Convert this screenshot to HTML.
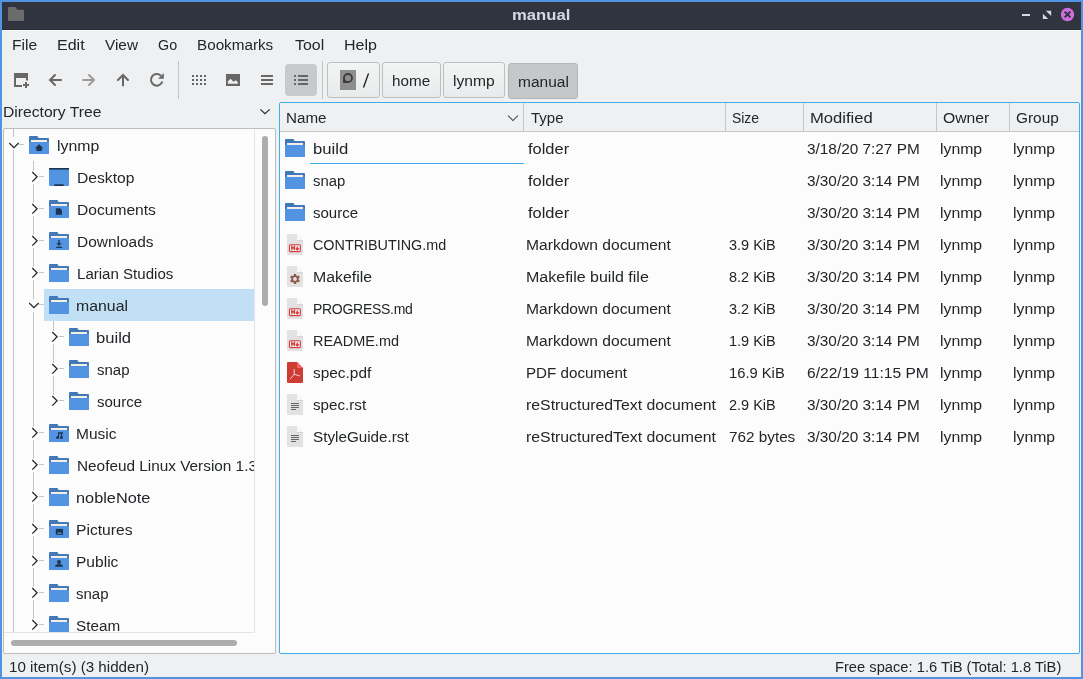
<!DOCTYPE html>
<html><head><meta charset="utf-8">
<style>
*{margin:0;padding:0;box-sizing:border-box}
html,body{width:1083px;height:679px;overflow:hidden;background:#5294e2}
body{position:relative;font-family:"Liberation Sans",sans-serif;font-size:14px;color:#31363b}
.a{position:absolute}
.t{position:absolute;white-space:nowrap;line-height:16px;will-change:transform}
.ln{position:absolute;background:#c9cacb}
.btn{position:absolute;border:1px solid #bcbebf;border-radius:3px;background:linear-gradient(#f3f4f4,#e9eaeb)}
</style></head><body>

<div class="a" style="left:2px;top:2px;width:1079px;height:675px;background:#eff0f1"></div>
<div class="a" style="left:2px;top:2px;width:1079px;height:27px;background:#2f343f"></div>
<div class="a" style="left:2px;top:29px;width:1079px;height:1px;background:#262a33"></div>
<div class="a" style="left:2px;top:30px;width:1079px;height:1px;background:#f8f9f9"></div>
<svg class="a" style="left:8px;top:7px" width="16" height="14" viewBox="0 0 16 14"><path d="M0 1a1 1 0 0 1 1-1h6.5l1.8 2.8H15a1 1 0 0 1 1 1v9.2a1 1 0 0 1-1 1H1a1 1 0 0 1-1-1z" fill="#6b6b6b"/></svg>
<div class="t" style="left:511.5px;top:7px;font-size:15px;font-weight:bold;color:#d3dae3;transform:scaleX(1.11);transform-origin:0 0">manual</div>
<div class="a" style="left:1022px;top:14px;width:8px;height:2px;background:#d3dae3"></div>
<svg class="a" style="left:1040px;top:8px" width="14" height="14" viewBox="1040 8 14 14"><path d="M1045.8 10.8H1051.2V16.1Z" fill="#d3dae3"/><path d="M1042.9 13.75V19.1H1048.2Z" fill="#d3dae3"/></svg>
<svg class="a" style="left:1058px;top:5px" width="20" height="20" viewBox="1058 5 20 20"><circle cx="1067.5" cy="14.5" r="6.65" fill="#cf6fdf"/><path d="M1064.6 11.6L1070.4 17.4M1070.4 11.6L1064.6 17.4" stroke="#2f343f" stroke-width="2"/></svg>
<div class="t" style="left:11.99px;top:37px;font-size:14px;color:#232629;transform:scaleX(1.1143);transform-origin:0 0;">File</div>
<div class="t" style="left:56.56px;top:37px;font-size:14px;color:#232629;transform:scaleX(1.1435);transform-origin:0 0;">Edit</div>
<div class="t" style="left:104.80px;top:37px;font-size:14px;color:#232629;transform:scaleX(1.0967);transform-origin:0 0;">View</div>
<div class="t" style="left:157.88px;top:37px;font-size:14px;color:#232629;transform:scaleX(1.0235);transform-origin:0 0;">Go</div>
<div class="t" style="left:197.31px;top:37px;font-size:14px;color:#232629;transform:scaleX(1.0884);transform-origin:0 0;">Bookmarks</div>
<div class="t" style="left:295.30px;top:37px;font-size:14px;color:#232629;transform:scaleX(1.1360);transform-origin:0 0;">Tool</div>
<div class="t" style="left:343.86px;top:37px;font-size:14px;color:#232629;transform:scaleX(1.1444);transform-origin:0 0;">Help</div>
<svg class="a" style="left:0;top:0" width="1083" height="100" viewBox="0 0 1083 100"><path d="M14 73H28V80.6H26V78H16V85H22V87H14Z" fill="#676767"/><rect x="23" y="84" width="6" height="2" fill="#676767"/><rect x="25" y="82" width="2" height="6" fill="#676767"/><path d="M61 80H50.5M55 75L50 80L55 85" stroke="#676767" stroke-width="2" fill="none" stroke-linecap="round"/><path d="M83 80H93.5M89 75L94 80L89 85" stroke="#9b9b9b" stroke-width="2" fill="none" stroke-linecap="round"/><path d="M123 85.5V75M118 80L123 75L128 80" stroke="#676767" stroke-width="2" fill="none" stroke-linecap="round"/><path d="M160.9 75.7A5.8 5.8 0 1 0 162.35 81.5" stroke="#676767" stroke-width="2" fill="none"/><path d="M163.8 72.9V78.7H158.1Z" fill="#676767"/><rect x="192" y="75" width="2" height="2" fill="#676767"/><rect x="192" y="79" width="2" height="2" fill="#676767"/><rect x="192" y="83" width="2" height="2" fill="#676767"/><rect x="196" y="75" width="2" height="2" fill="#676767"/><rect x="196" y="79" width="2" height="2" fill="#676767"/><rect x="196" y="83" width="2" height="2" fill="#676767"/><rect x="200" y="75" width="2" height="2" fill="#676767"/><rect x="200" y="79" width="2" height="2" fill="#676767"/><rect x="200" y="83" width="2" height="2" fill="#676767"/><rect x="204" y="75" width="2" height="2" fill="#676767"/><rect x="204" y="79" width="2" height="2" fill="#676767"/><rect x="204" y="83" width="2" height="2" fill="#676767"/><rect x="226" y="74" width="14" height="12" fill="#676767"/><path d="M227.9 83.8V81.2L230.6 78.7L233.4 81.8L235.9 80.3L237.9 82.4V83.8Z" fill="#eff0f1"/><rect x="261" y="75" width="12" height="2" fill="#676767"/><rect x="261" y="79" width="12" height="2" fill="#676767"/><rect x="261" y="83" width="12" height="2" fill="#676767"/><rect x="285" y="64" width="32" height="32" rx="4" fill="#c8c9cb"/><rect x="294" y="75" width="2" height="2" fill="#676767"/><rect x="298" y="75" width="10" height="2" fill="#676767"/><rect x="294" y="79" width="2" height="2" fill="#676767"/><rect x="298" y="79" width="10" height="2" fill="#676767"/><rect x="294" y="83" width="2" height="2" fill="#676767"/><rect x="298" y="83" width="10" height="2" fill="#676767"/><rect x="178" y="61" width="1" height="38" fill="#c3c4c5"/><rect x="322" y="61" width="1" height="38" fill="#c3c4c5"/></svg>
<div class="btn" style="left:327px;top:62px;width:53px;height:36px"></div>
<svg class="a" style="left:340px;top:70px" width="16" height="20" viewBox="0 0 16 20"><rect width="16" height="20" fill="#8e8e8e"/><path d="M8 3.1A4.9 4.9 0 1 1 8 12.9H3.1V8A4.9 4.9 0 0 1 8 3.1z" fill="#3c3c3c"/><circle cx="8" cy="8" r="3.1" fill="#8e8e8e"/></svg>
<svg class="a" style="left:355px;top:68px" width="20" height="24" viewBox="355 68 20 24"><path d="M368.3 74L363.7 87" stroke="#232629" stroke-width="1.4" stroke-linecap="round"/></svg>
<div class="btn" style="left:382px;top:62px;width:59px;height:36px"></div>
<div class="t" style="left:392.31px;top:73px;font-size:14px;color:#232629;transform:scaleX(1.0882);transform-origin:0 0;">home</div>
<div class="btn" style="left:443px;top:62px;width:62px;height:36px"></div>
<div class="t" style="left:453.29px;top:73px;font-size:14px;color:#232629;transform:scaleX(1.1139);transform-origin:0 0;">lynmp</div>
<div class="btn" style="left:508px;top:63px;width:70px;height:36px;background:#c6c7c9;border-color:#b5b6b8"></div>
<div class="t" style="left:518.09px;top:74px;font-size:14px;color:#232629;transform:scaleX(1.1068);transform-origin:0 0;">manual</div>
<div class="t" style="left:3.08px;top:104px;font-size:14px;color:#232629;transform:scaleX(1.1186);transform-origin:0 0;">Directory Tree</div>
<svg class="a" style="left:259px;top:107px" width="12" height="8" viewBox="0 0 12 8"><path d="M1.4 2.4L6 6.6L10.7 2.4" stroke="#232629" stroke-width="1.2" fill="none"/></svg>
<div class="a" style="left:3px;top:128px;width:273px;height:526px;border:1px solid #bcbebf;border-radius:2px;background:#fcfcfc"></div>
<div class="a" style="left:254px;top:129px;width:1px;height:503px;background:#e3e4e5"></div>
<div class="a" style="left:4px;top:632px;width:251px;height:1px;background:#e3e4e5"></div>
<div class="a" style="left:262px;top:136px;width:6px;height:170px;border-radius:3px;background:#acadaf"></div>
<div class="a" style="left:11px;top:640px;width:226px;height:6px;border-radius:3px;background:#acadaf"></div>
<div class="a" style="left:4px;top:129px;width:250px;height:503px;overflow:hidden">
<div class="a" style="left:-4px;top:-129px;width:1083px;height:679px"><div class="a" style="left:44px;top:289px;width:210px;height:32px;background:#c2e0f5"></div>
<div class="a" style="left:13px;top:129px;width:1px;height:8px;background:#c3c4c5"></div>
<div class="a" style="left:13px;top:150px;width:1px;height:482px;background:#c3c4c5"></div>
<div class="a" style="left:33px;top:161px;width:1px;height:10px;background:#c3c4c5"></div>
<div class="a" style="left:33px;top:184px;width:1px;height:11px;background:#c3c4c5"></div>
<div class="a" style="left:33px;top:193px;width:1px;height:10px;background:#c3c4c5"></div>
<div class="a" style="left:33px;top:216px;width:1px;height:11px;background:#c3c4c5"></div>
<div class="a" style="left:33px;top:225px;width:1px;height:10px;background:#c3c4c5"></div>
<div class="a" style="left:33px;top:248px;width:1px;height:11px;background:#c3c4c5"></div>
<div class="a" style="left:33px;top:257px;width:1px;height:10px;background:#c3c4c5"></div>
<div class="a" style="left:33px;top:280px;width:1px;height:11px;background:#c3c4c5"></div>
<div class="a" style="left:33px;top:289px;width:1px;height:10px;background:#c3c4c5"></div>
<div class="a" style="left:33px;top:312px;width:1px;height:11px;background:#c3c4c5"></div>
<div class="a" style="left:33px;top:321px;width:1px;height:33px;background:#c3c4c5"></div>
<div class="a" style="left:53px;top:321px;width:1px;height:10px;background:#c3c4c5"></div>
<div class="a" style="left:53px;top:344px;width:1px;height:11px;background:#c3c4c5"></div>
<div class="a" style="left:33px;top:353px;width:1px;height:33px;background:#c3c4c5"></div>
<div class="a" style="left:53px;top:353px;width:1px;height:10px;background:#c3c4c5"></div>
<div class="a" style="left:53px;top:376px;width:1px;height:11px;background:#c3c4c5"></div>
<div class="a" style="left:33px;top:385px;width:1px;height:33px;background:#c3c4c5"></div>
<div class="a" style="left:53px;top:385px;width:1px;height:10px;background:#c3c4c5"></div>
<div class="a" style="left:33px;top:417px;width:1px;height:10px;background:#c3c4c5"></div>
<div class="a" style="left:33px;top:440px;width:1px;height:11px;background:#c3c4c5"></div>
<div class="a" style="left:33px;top:449px;width:1px;height:10px;background:#c3c4c5"></div>
<div class="a" style="left:33px;top:472px;width:1px;height:11px;background:#c3c4c5"></div>
<div class="a" style="left:33px;top:481px;width:1px;height:10px;background:#c3c4c5"></div>
<div class="a" style="left:33px;top:504px;width:1px;height:11px;background:#c3c4c5"></div>
<div class="a" style="left:33px;top:513px;width:1px;height:10px;background:#c3c4c5"></div>
<div class="a" style="left:33px;top:536px;width:1px;height:11px;background:#c3c4c5"></div>
<div class="a" style="left:33px;top:545px;width:1px;height:10px;background:#c3c4c5"></div>
<div class="a" style="left:33px;top:568px;width:1px;height:11px;background:#c3c4c5"></div>
<div class="a" style="left:33px;top:577px;width:1px;height:10px;background:#c3c4c5"></div>
<div class="a" style="left:33px;top:600px;width:1px;height:11px;background:#c3c4c5"></div>
<div class="a" style="left:33px;top:609px;width:1px;height:10px;background:#c3c4c5"></div>
<div class="a" style="left:33px;top:632px;width:1px;height:11px;background:#c3c4c5"></div>
<div class="a" style="left:19px;top:144px;width:5px;height:1px;background:#c3c4c5"></div>
<svg class="a" style="left:9px;top:142px" width="11" height="7" viewBox="0 0 11 7"><path d="M0.2 1L4.9 5.6L9.7 1" stroke="#232629" stroke-width="1.25" fill="none"/></svg>
<svg class="a" style="left:29px;top:136px" width="20" height="18" viewBox="0 0 20 18"><path d="M1 0h7.5l1 2H19a1 1 0 0 1 1 1v14a1 1 0 0 1-1 1H1a1 1 0 0 1-1-1V1a1 1 0 0 1 1-1z" fill="#4277b8"/><rect x="2" y="4" width="16" height="2" fill="#f4efe6"/><path d="M0 6h20v11a1 1 0 0 1-1 1H1a1 1 0 0 1-1-1z" fill="#5294e2"/><path d="M10.15 8.2L5.9 12.2H7.4V14.9H12.9V12.2H14.4Z" fill="#1c3552"/></svg>
<div class="t" style="left:57.07px;top:137.5px;font-size:14px;color:#232629;transform:scaleX(1.1306);transform-origin:0 0;">lynmp</div>
<div class="a" style="left:39px;top:176px;width:5px;height:1px;background:#c3c4c5"></div>
<svg class="a" style="left:31px;top:171px" width="8" height="12" viewBox="0 0 8 12"><path d="M1.3 1L6.1 5.8L1.3 10.6" stroke="#232629" stroke-width="1.25" fill="none"/></svg>
<svg class="a" style="left:49px;top:168px" width="20" height="18" viewBox="0 0 20 18"><rect x="0" y="0" width="20" height="18" rx="1" fill="#5294e2"/><rect x="0" y="0" width="20" height="1.6" fill="#1c3552"/><rect x="5.2" y="16.2" width="9.6" height="1.8" rx="0.5" fill="#1c3552"/></svg>
<div class="t" style="left:76.78px;top:169.5px;font-size:14px;color:#232629;transform:scaleX(1.1180);transform-origin:0 0;">Desktop</div>
<div class="a" style="left:39px;top:208px;width:5px;height:1px;background:#c3c4c5"></div>
<svg class="a" style="left:31px;top:203px" width="8" height="12" viewBox="0 0 8 12"><path d="M1.3 1L6.1 5.8L1.3 10.6" stroke="#232629" stroke-width="1.25" fill="none"/></svg>
<svg class="a" style="left:49px;top:200px" width="20" height="18" viewBox="0 0 20 18"><path d="M1 0h7.5l1 2H19a1 1 0 0 1 1 1v14a1 1 0 0 1-1 1H1a1 1 0 0 1-1-1V1a1 1 0 0 1 1-1z" fill="#4277b8"/><rect x="2" y="4" width="16" height="2" fill="#f4efe6"/><path d="M0 6h20v11a1 1 0 0 1-1 1H1a1 1 0 0 1-1-1z" fill="#5294e2"/><path d="M6.8 8.2h4.2l2 2v4.6H6.8z" fill="#1c3552"/></svg>
<div class="t" style="left:76.79px;top:201.5px;font-size:14px;color:#232629;transform:scaleX(1.1145);transform-origin:0 0;">Documents</div>
<div class="a" style="left:39px;top:240px;width:5px;height:1px;background:#c3c4c5"></div>
<svg class="a" style="left:31px;top:235px" width="8" height="12" viewBox="0 0 8 12"><path d="M1.3 1L6.1 5.8L1.3 10.6" stroke="#232629" stroke-width="1.25" fill="none"/></svg>
<svg class="a" style="left:49px;top:232px" width="20" height="18" viewBox="0 0 20 18"><path d="M1 0h7.5l1 2H19a1 1 0 0 1 1 1v14a1 1 0 0 1-1 1H1a1 1 0 0 1-1-1V1a1 1 0 0 1 1-1z" fill="#4277b8"/><rect x="2" y="4" width="16" height="2" fill="#f4efe6"/><path d="M0 6h20v11a1 1 0 0 1-1 1H1a1 1 0 0 1-1-1z" fill="#5294e2"/><path d="M9.3 8h1.4v3.3h1.9l-2.6 2.6-2.6-2.6h1.9z M7.1 14.8h5.9v1.2H7.1z" fill="#1c3552"/></svg>
<div class="t" style="left:76.80px;top:233.5px;font-size:14px;color:#232629;transform:scaleX(1.1044);transform-origin:0 0;">Downloads</div>
<div class="a" style="left:39px;top:272px;width:5px;height:1px;background:#c3c4c5"></div>
<svg class="a" style="left:31px;top:267px" width="8" height="12" viewBox="0 0 8 12"><path d="M1.3 1L6.1 5.8L1.3 10.6" stroke="#232629" stroke-width="1.25" fill="none"/></svg>
<svg class="a" style="left:49px;top:264px" width="20" height="18" viewBox="0 0 20 18"><path d="M1 0h7.5l1 2H19a1 1 0 0 1 1 1v14a1 1 0 0 1-1 1H1a1 1 0 0 1-1-1V1a1 1 0 0 1 1-1z" fill="#4277b8"/><rect x="2" y="4" width="16" height="2" fill="#f4efe6"/><path d="M0 6h20v11a1 1 0 0 1-1 1H1a1 1 0 0 1-1-1z" fill="#5294e2"/></svg>
<div class="t" style="left:76.82px;top:265.5px;font-size:14px;color:#232629;transform:scaleX(1.0761);transform-origin:0 0;">Larian Studios</div>
<div class="a" style="left:39px;top:304px;width:5px;height:1px;background:#c3c4c5"></div>
<svg class="a" style="left:29px;top:302px" width="11" height="7" viewBox="0 0 11 7"><path d="M0.2 1L4.9 5.6L9.7 1" stroke="#232629" stroke-width="1.25" fill="none"/></svg>
<svg class="a" style="left:49px;top:296px" width="20" height="18" viewBox="0 0 20 18"><path d="M1 0h7.5l1 2H19a1 1 0 0 1 1 1v14a1 1 0 0 1-1 1H1a1 1 0 0 1-1-1V1a1 1 0 0 1 1-1z" fill="#4277b8"/><rect x="2" y="4" width="16" height="2" fill="#f4efe6"/><path d="M0 6h20v11a1 1 0 0 1-1 1H1a1 1 0 0 1-1-1z" fill="#5294e2"/></svg>
<div class="t" style="left:76.37px;top:297.5px;font-size:14px;color:#232629;transform:scaleX(1.1318);transform-origin:0 0;">manual</div>
<div class="a" style="left:59px;top:336px;width:5px;height:1px;background:#c3c4c5"></div>
<svg class="a" style="left:51px;top:331px" width="8" height="12" viewBox="0 0 8 12"><path d="M1.3 1L6.1 5.8L1.3 10.6" stroke="#232629" stroke-width="1.25" fill="none"/></svg>
<svg class="a" style="left:69px;top:328px" width="20" height="18" viewBox="0 0 20 18"><path d="M1 0h7.5l1 2H19a1 1 0 0 1 1 1v14a1 1 0 0 1-1 1H1a1 1 0 0 1-1-1V1a1 1 0 0 1 1-1z" fill="#4277b8"/><rect x="2" y="4" width="16" height="2" fill="#f4efe6"/><path d="M0 6h20v11a1 1 0 0 1-1 1H1a1 1 0 0 1-1-1z" fill="#5294e2"/></svg>
<div class="t" style="left:96.41px;top:329.5px;font-size:14px;color:#232629;transform:scaleX(1.1857);transform-origin:0 0;">build</div>
<div class="a" style="left:59px;top:368px;width:5px;height:1px;background:#c3c4c5"></div>
<svg class="a" style="left:51px;top:363px" width="8" height="12" viewBox="0 0 8 12"><path d="M1.3 1L6.1 5.8L1.3 10.6" stroke="#232629" stroke-width="1.25" fill="none"/></svg>
<svg class="a" style="left:69px;top:360px" width="20" height="18" viewBox="0 0 20 18"><path d="M1 0h7.5l1 2H19a1 1 0 0 1 1 1v14a1 1 0 0 1-1 1H1a1 1 0 0 1-1-1V1a1 1 0 0 1 1-1z" fill="#4277b8"/><rect x="2" y="4" width="16" height="2" fill="#f4efe6"/><path d="M0 6h20v11a1 1 0 0 1-1 1H1a1 1 0 0 1-1-1z" fill="#5294e2"/></svg>
<div class="t" style="left:96.53px;top:361.5px;font-size:14px;color:#232629;transform:scaleX(1.0724);transform-origin:0 0;">snap</div>
<div class="a" style="left:59px;top:400px;width:5px;height:1px;background:#c3c4c5"></div>
<svg class="a" style="left:51px;top:395px" width="8" height="12" viewBox="0 0 8 12"><path d="M1.3 1L6.1 5.8L1.3 10.6" stroke="#232629" stroke-width="1.25" fill="none"/></svg>
<svg class="a" style="left:69px;top:392px" width="20" height="18" viewBox="0 0 20 18"><path d="M1 0h7.5l1 2H19a1 1 0 0 1 1 1v14a1 1 0 0 1-1 1H1a1 1 0 0 1-1-1V1a1 1 0 0 1 1-1z" fill="#4277b8"/><rect x="2" y="4" width="16" height="2" fill="#f4efe6"/><path d="M0 6h20v11a1 1 0 0 1-1 1H1a1 1 0 0 1-1-1z" fill="#5294e2"/></svg>
<div class="t" style="left:96.53px;top:393.5px;font-size:14px;color:#232629;transform:scaleX(1.0732);transform-origin:0 0;">source</div>
<div class="a" style="left:39px;top:432px;width:5px;height:1px;background:#c3c4c5"></div>
<svg class="a" style="left:31px;top:427px" width="8" height="12" viewBox="0 0 8 12"><path d="M1.3 1L6.1 5.8L1.3 10.6" stroke="#232629" stroke-width="1.25" fill="none"/></svg>
<svg class="a" style="left:49px;top:424px" width="20" height="18" viewBox="0 0 20 18"><path d="M1 0h7.5l1 2H19a1 1 0 0 1 1 1v14a1 1 0 0 1-1 1H1a1 1 0 0 1-1-1V1a1 1 0 0 1 1-1z" fill="#4277b8"/><rect x="2" y="4" width="16" height="2" fill="#f4efe6"/><path d="M0 6h20v11a1 1 0 0 1-1 1H1a1 1 0 0 1-1-1z" fill="#5294e2"/><path d="M9 8.2h5v1.6h-0.9V13.3h-1.2V9.8H10.2V13.3H9z" fill="#1c3552"/><circle cx="8.6" cy="13.6" r="1.5" fill="#1c3552"/><circle cx="12.5" cy="13.6" r="1.5" fill="#1c3552"/></svg>
<div class="t" style="left:76.39px;top:425.5px;font-size:14px;color:#232629;transform:scaleX(1.1086);transform-origin:0 0;">Music</div>
<div class="a" style="left:39px;top:464px;width:5px;height:1px;background:#c3c4c5"></div>
<svg class="a" style="left:31px;top:459px" width="8" height="12" viewBox="0 0 8 12"><path d="M1.3 1L6.1 5.8L1.3 10.6" stroke="#232629" stroke-width="1.25" fill="none"/></svg>
<svg class="a" style="left:49px;top:456px" width="20" height="18" viewBox="0 0 20 18"><path d="M1 0h7.5l1 2H19a1 1 0 0 1 1 1v14a1 1 0 0 1-1 1H1a1 1 0 0 1-1-1V1a1 1 0 0 1 1-1z" fill="#4277b8"/><rect x="2" y="4" width="16" height="2" fill="#f4efe6"/><path d="M0 6h20v11a1 1 0 0 1-1 1H1a1 1 0 0 1-1-1z" fill="#5294e2"/></svg>
<div class="t" style="left:76.80px;top:457.5px;font-size:14px;color:#232629;transform:scaleX(1.0957);transform-origin:0 0;">Neofeud Linux Version 1.3</div>
<div class="a" style="left:39px;top:496px;width:5px;height:1px;background:#c3c4c5"></div>
<svg class="a" style="left:31px;top:491px" width="8" height="12" viewBox="0 0 8 12"><path d="M1.3 1L6.1 5.8L1.3 10.6" stroke="#232629" stroke-width="1.25" fill="none"/></svg>
<svg class="a" style="left:49px;top:488px" width="20" height="18" viewBox="0 0 20 18"><path d="M1 0h7.5l1 2H19a1 1 0 0 1 1 1v14a1 1 0 0 1-1 1H1a1 1 0 0 1-1-1V1a1 1 0 0 1 1-1z" fill="#4277b8"/><rect x="2" y="4" width="16" height="2" fill="#f4efe6"/><path d="M0 6h20v11a1 1 0 0 1-1 1H1a1 1 0 0 1-1-1z" fill="#5294e2"/></svg>
<div class="t" style="left:76.34px;top:489.5px;font-size:14px;color:#232629;transform:scaleX(1.1645);transform-origin:0 0;">nobleNote</div>
<div class="a" style="left:39px;top:528px;width:5px;height:1px;background:#c3c4c5"></div>
<svg class="a" style="left:31px;top:523px" width="8" height="12" viewBox="0 0 8 12"><path d="M1.3 1L6.1 5.8L1.3 10.6" stroke="#232629" stroke-width="1.25" fill="none"/></svg>
<svg class="a" style="left:49px;top:520px" width="20" height="18" viewBox="0 0 20 18"><path d="M1 0h7.5l1 2H19a1 1 0 0 1 1 1v14a1 1 0 0 1-1 1H1a1 1 0 0 1-1-1V1a1 1 0 0 1 1-1z" fill="#4277b8"/><rect x="2" y="4" width="16" height="2" fill="#f4efe6"/><path d="M0 6h20v11a1 1 0 0 1-1 1H1a1 1 0 0 1-1-1z" fill="#5294e2"/><rect x="6.8" y="8.9" width="7.2" height="5.9" fill="#1c3552"/><path d="M7.8 13.8l1.6-1.8 1 .9 1-.8 1.6 1.7z" fill="#5294e2"/></svg>
<div class="t" style="left:76.38px;top:521.5px;font-size:14px;color:#232629;transform:scaleX(1.1184);transform-origin:0 0;">Pictures</div>
<div class="a" style="left:39px;top:560px;width:5px;height:1px;background:#c3c4c5"></div>
<svg class="a" style="left:31px;top:555px" width="8" height="12" viewBox="0 0 8 12"><path d="M1.3 1L6.1 5.8L1.3 10.6" stroke="#232629" stroke-width="1.25" fill="none"/></svg>
<svg class="a" style="left:49px;top:552px" width="20" height="18" viewBox="0 0 20 18"><path d="M1 0h7.5l1 2H19a1 1 0 0 1 1 1v14a1 1 0 0 1-1 1H1a1 1 0 0 1-1-1V1a1 1 0 0 1 1-1z" fill="#4277b8"/><rect x="2" y="4" width="16" height="2" fill="#f4efe6"/><path d="M0 6h20v11a1 1 0 0 1-1 1H1a1 1 0 0 1-1-1z" fill="#5294e2"/><circle cx="10" cy="10" r="2" fill="#1c3552"/><path d="M6 14.8c0-1.8 1.6-2.8 4-2.8s4 1 4 2.8z" fill="#1c3552"/></svg>
<div class="t" style="left:76.39px;top:553.5px;font-size:14px;color:#232629;transform:scaleX(1.1108);transform-origin:0 0;">Public</div>
<div class="a" style="left:39px;top:592px;width:5px;height:1px;background:#c3c4c5"></div>
<svg class="a" style="left:31px;top:587px" width="8" height="12" viewBox="0 0 8 12"><path d="M1.3 1L6.1 5.8L1.3 10.6" stroke="#232629" stroke-width="1.25" fill="none"/></svg>
<svg class="a" style="left:49px;top:584px" width="20" height="18" viewBox="0 0 20 18"><path d="M1 0h7.5l1 2H19a1 1 0 0 1 1 1v14a1 1 0 0 1-1 1H1a1 1 0 0 1-1-1V1a1 1 0 0 1 1-1z" fill="#4277b8"/><rect x="2" y="4" width="16" height="2" fill="#f4efe6"/><path d="M0 6h20v11a1 1 0 0 1-1 1H1a1 1 0 0 1-1-1z" fill="#5294e2"/></svg>
<div class="t" style="left:76.43px;top:585.5px;font-size:14px;color:#232629;transform:scaleX(1.0724);transform-origin:0 0;">snap</div>
<div class="a" style="left:39px;top:624px;width:5px;height:1px;background:#c3c4c5"></div>
<svg class="a" style="left:31px;top:619px" width="8" height="12" viewBox="0 0 8 12"><path d="M1.3 1L6.1 5.8L1.3 10.6" stroke="#232629" stroke-width="1.25" fill="none"/></svg>
<svg class="a" style="left:49px;top:616px" width="20" height="18" viewBox="0 0 20 18"><path d="M1 0h7.5l1 2H19a1 1 0 0 1 1 1v14a1 1 0 0 1-1 1H1a1 1 0 0 1-1-1V1a1 1 0 0 1 1-1z" fill="#4277b8"/><rect x="2" y="4" width="16" height="2" fill="#f4efe6"/><path d="M0 6h20v11a1 1 0 0 1-1 1H1a1 1 0 0 1-1-1z" fill="#5294e2"/></svg>
<div class="t" style="left:76.41px;top:617.5px;font-size:14px;color:#232629;transform:scaleX(1.0897);transform-origin:0 0;">Steam</div></div>
</div>
<div class="a" style="left:279px;top:102px;width:801px;height:552px;border:1px solid #3daee9;border-radius:2px;background:#fcfcfc"></div>
<div class="a" style="left:280px;top:103px;width:799px;height:29px;background:#eff0f1;border-bottom:1px solid #c6c7c8"></div>
<div class="a" style="left:523px;top:103px;width:1px;height:28px;background:#c6c7c8"></div>
<div class="a" style="left:725px;top:103px;width:1px;height:28px;background:#c6c7c8"></div>
<div class="a" style="left:803px;top:103px;width:1px;height:28px;background:#c6c7c8"></div>
<div class="a" style="left:936px;top:103px;width:1px;height:28px;background:#c6c7c8"></div>
<div class="a" style="left:1009px;top:103px;width:1px;height:28px;background:#c6c7c8"></div>
<div class="t" style="left:285.61px;top:110px;font-size:14px;color:#232629;transform:scaleX(1.0861);transform-origin:0 0;">Name</div>
<div class="t" style="left:530.50px;top:110px;font-size:14px;color:#232629;transform:scaleX(1.0700);transform-origin:0 0;">Type</div>
<div class="t" style="left:732.00px;top:110px;font-size:14px;color:#232629;letter-spacing:-0.067px;">Size</div>
<div class="t" style="left:809.61px;top:110px;font-size:14px;color:#232629;transform:scaleX(1.1863);transform-origin:0 0;">Modified</div>
<div class="t" style="left:942.68px;top:110px;font-size:14px;color:#232629;transform:scaleX(1.1225);transform-origin:0 0;">Owner</div>
<div class="t" style="left:1015.90px;top:110px;font-size:14px;color:#232629;transform:scaleX(1.1000);transform-origin:0 0;">Group</div>
<svg class="a" style="left:507px;top:114px" width="12" height="8" viewBox="0 0 12 8"><path d="M1 1.5l5 5 5-5" stroke="#3b3f44" stroke-width="1.05" fill="none"/></svg>
<svg class="a" style="left:285px;top:139px" width="20" height="18" viewBox="0 0 20 18"><path d="M1 0h7.5l1 2H19a1 1 0 0 1 1 1v14a1 1 0 0 1-1 1H1a1 1 0 0 1-1-1V1a1 1 0 0 1 1-1z" fill="#4277b8"/><rect x="2" y="4" width="16" height="2" fill="#f4efe6"/><path d="M0 6h20v11a1 1 0 0 1-1 1H1a1 1 0 0 1-1-1z" fill="#5294e2"/></svg>
<div class="t" style="left:312.71px;top:141px;font-size:14px;color:#232629;transform:scaleX(1.1929);transform-origin:0 0;">build</div>
<div class="t" style="left:527.50px;top:141px;font-size:14px;color:#232629;transform:scaleX(1.1743);transform-origin:0 0;">folder</div>
<div class="t" style="left:806.90px;top:141px;font-size:14px;color:#232629;transform:scaleX(1.0970);transform-origin:0 0;">3/18/20 7:27 PM</div>
<div class="t" style="left:939.77px;top:141px;font-size:14px;color:#232629;transform:scaleX(1.1278);transform-origin:0 0;">lynmp</div>
<div class="t" style="left:1012.67px;top:141px;font-size:14px;color:#232629;transform:scaleX(1.1278);transform-origin:0 0;">lynmp</div>
<svg class="a" style="left:285px;top:171px" width="20" height="18" viewBox="0 0 20 18"><path d="M1 0h7.5l1 2H19a1 1 0 0 1 1 1v14a1 1 0 0 1-1 1H1a1 1 0 0 1-1-1V1a1 1 0 0 1 1-1z" fill="#4277b8"/><rect x="2" y="4" width="16" height="2" fill="#f4efe6"/><path d="M0 6h20v11a1 1 0 0 1-1 1H1a1 1 0 0 1-1-1z" fill="#5294e2"/></svg>
<div class="t" style="left:312.84px;top:173px;font-size:14px;color:#232629;transform:scaleX(1.0621);transform-origin:0 0;">snap</div>
<div class="t" style="left:527.50px;top:173px;font-size:14px;color:#232629;transform:scaleX(1.1743);transform-origin:0 0;">folder</div>
<div class="t" style="left:806.90px;top:173px;font-size:14px;color:#232629;transform:scaleX(1.0970);transform-origin:0 0;">3/30/20 3:14 PM</div>
<div class="t" style="left:939.77px;top:173px;font-size:14px;color:#232629;transform:scaleX(1.1278);transform-origin:0 0;">lynmp</div>
<div class="t" style="left:1012.67px;top:173px;font-size:14px;color:#232629;transform:scaleX(1.1278);transform-origin:0 0;">lynmp</div>
<svg class="a" style="left:285px;top:203px" width="20" height="18" viewBox="0 0 20 18"><path d="M1 0h7.5l1 2H19a1 1 0 0 1 1 1v14a1 1 0 0 1-1 1H1a1 1 0 0 1-1-1V1a1 1 0 0 1 1-1z" fill="#4277b8"/><rect x="2" y="4" width="16" height="2" fill="#f4efe6"/><path d="M0 6h20v11a1 1 0 0 1-1 1H1a1 1 0 0 1-1-1z" fill="#5294e2"/></svg>
<div class="t" style="left:312.83px;top:205px;font-size:14px;color:#232629;transform:scaleX(1.0732);transform-origin:0 0;">source</div>
<div class="t" style="left:527.50px;top:205px;font-size:14px;color:#232629;transform:scaleX(1.1743);transform-origin:0 0;">folder</div>
<div class="t" style="left:806.90px;top:205px;font-size:14px;color:#232629;transform:scaleX(1.0970);transform-origin:0 0;">3/30/20 3:14 PM</div>
<div class="t" style="left:939.77px;top:205px;font-size:14px;color:#232629;transform:scaleX(1.1278);transform-origin:0 0;">lynmp</div>
<div class="t" style="left:1012.67px;top:205px;font-size:14px;color:#232629;transform:scaleX(1.1278);transform-origin:0 0;">lynmp</div>
<svg class="a" style="left:287px;top:234px" width="16" height="21" viewBox="0 0 16 21"><path d="M1 0h9l6 6v14a1 1 0 0 1-1 1H1a1 1 0 0 1-1-1V1a1 1 0 0 1 1-1z" fill="#e2e2e2"/><path d="M10 0l6 6h-6z" fill="#f7f7f7"/><rect x="10" y="6" width="6" height="0.8" fill="#d2d2d2"/><rect x="2.45" y="10.75" width="10.9" height="6.9" rx="1" fill="#e6f2f2" stroke="#df3f3f" stroke-width="1.1"/><path d="M4.75 16.2V12.5L6.1 14.2L7.45 12.5V16.2" stroke="#df3f3f" stroke-width="1.3" fill="none"/><path d="M10.35 12.4v3.4M8.95 14.3l1.4 1.6 1.4-1.6" stroke="#df3f3f" stroke-width="1.3" fill="none"/></svg>
<div class="t" style="left:312.88px;top:237px;font-size:14px;color:#232629;transform:scaleX(1.0250);transform-origin:0 0;">CONTRIBUTING.md</div>
<div class="t" style="left:526.39px;top:237px;font-size:14px;color:#232629;transform:scaleX(1.1147);transform-origin:0 0;">Markdown document</div>
<div class="t" style="left:729.17px;top:237px;font-size:14px;color:#232629;transform:scaleX(1.0341);transform-origin:0 0;">3.9 KiB</div>
<div class="t" style="left:806.90px;top:237px;font-size:14px;color:#232629;transform:scaleX(1.0970);transform-origin:0 0;">3/30/20 3:14 PM</div>
<div class="t" style="left:939.77px;top:237px;font-size:14px;color:#232629;transform:scaleX(1.1278);transform-origin:0 0;">lynmp</div>
<div class="t" style="left:1012.67px;top:237px;font-size:14px;color:#232629;transform:scaleX(1.1278);transform-origin:0 0;">lynmp</div>
<svg class="a" style="left:287px;top:266px" width="16" height="21" viewBox="0 0 16 21"><path d="M1 0h9l6 6v14a1 1 0 0 1-1 1H1a1 1 0 0 1-1-1V1a1 1 0 0 1 1-1z" fill="#e2e2e2"/><path d="M10 0l6 6h-6z" fill="#f7f7f7"/><rect x="10" y="6" width="6" height="0.8" fill="#d2d2d2"/><circle cx="8" cy="13" r="2.8" fill="none" stroke="#8a5a4c" stroke-width="1.8"/><rect x="6.9" y="8" width="2.2" height="2.2" fill="#8a5a4c" transform="rotate(0 8 13)"/><rect x="6.9" y="8" width="2.2" height="2.2" fill="#8a5a4c" transform="rotate(60 8 13)"/><rect x="6.9" y="8" width="2.2" height="2.2" fill="#8a5a4c" transform="rotate(120 8 13)"/><rect x="6.9" y="8" width="2.2" height="2.2" fill="#8a5a4c" transform="rotate(180 8 13)"/><rect x="6.9" y="8" width="2.2" height="2.2" fill="#8a5a4c" transform="rotate(240 8 13)"/><rect x="6.9" y="8" width="2.2" height="2.2" fill="#8a5a4c" transform="rotate(300 8 13)"/></svg>
<div class="t" style="left:312.77px;top:269px;font-size:14px;color:#232629;transform:scaleX(1.1314);transform-origin:0 0;">Makefile</div>
<div class="t" style="left:526.36px;top:269px;font-size:14px;color:#232629;transform:scaleX(1.1434);transform-origin:0 0;">Makefile build file</div>
<div class="t" style="left:729.17px;top:269px;font-size:14px;color:#232629;transform:scaleX(1.0341);transform-origin:0 0;">8.2 KiB</div>
<div class="t" style="left:806.90px;top:269px;font-size:14px;color:#232629;transform:scaleX(1.0970);transform-origin:0 0;">3/30/20 3:14 PM</div>
<div class="t" style="left:939.77px;top:269px;font-size:14px;color:#232629;transform:scaleX(1.1278);transform-origin:0 0;">lynmp</div>
<div class="t" style="left:1012.67px;top:269px;font-size:14px;color:#232629;transform:scaleX(1.1278);transform-origin:0 0;">lynmp</div>
<svg class="a" style="left:287px;top:298px" width="16" height="21" viewBox="0 0 16 21"><path d="M1 0h9l6 6v14a1 1 0 0 1-1 1H1a1 1 0 0 1-1-1V1a1 1 0 0 1 1-1z" fill="#e2e2e2"/><path d="M10 0l6 6h-6z" fill="#f7f7f7"/><rect x="10" y="6" width="6" height="0.8" fill="#d2d2d2"/><rect x="2.45" y="10.75" width="10.9" height="6.9" rx="1" fill="#e6f2f2" stroke="#df3f3f" stroke-width="1.1"/><path d="M4.75 16.2V12.5L6.1 14.2L7.45 12.5V16.2" stroke="#df3f3f" stroke-width="1.3" fill="none"/><path d="M10.35 12.4v3.4M8.95 14.3l1.4 1.6 1.4-1.6" stroke="#df3f3f" stroke-width="1.3" fill="none"/></svg>
<div class="t" style="left:312.90px;top:301px;font-size:14px;color:#232629;letter-spacing:-0.290px;">PROGRESS.md</div>
<div class="t" style="left:526.39px;top:301px;font-size:14px;color:#232629;transform:scaleX(1.1147);transform-origin:0 0;">Markdown document</div>
<div class="t" style="left:729.17px;top:301px;font-size:14px;color:#232629;transform:scaleX(1.0341);transform-origin:0 0;">3.2 KiB</div>
<div class="t" style="left:806.90px;top:301px;font-size:14px;color:#232629;transform:scaleX(1.0970);transform-origin:0 0;">3/30/20 3:14 PM</div>
<div class="t" style="left:939.77px;top:301px;font-size:14px;color:#232629;transform:scaleX(1.1278);transform-origin:0 0;">lynmp</div>
<div class="t" style="left:1012.67px;top:301px;font-size:14px;color:#232629;transform:scaleX(1.1278);transform-origin:0 0;">lynmp</div>
<svg class="a" style="left:287px;top:330px" width="16" height="21" viewBox="0 0 16 21"><path d="M1 0h9l6 6v14a1 1 0 0 1-1 1H1a1 1 0 0 1-1-1V1a1 1 0 0 1 1-1z" fill="#e2e2e2"/><path d="M10 0l6 6h-6z" fill="#f7f7f7"/><rect x="10" y="6" width="6" height="0.8" fill="#d2d2d2"/><rect x="2.45" y="10.75" width="10.9" height="6.9" rx="1" fill="#e6f2f2" stroke="#df3f3f" stroke-width="1.1"/><path d="M4.75 16.2V12.5L6.1 14.2L7.45 12.5V16.2" stroke="#df3f3f" stroke-width="1.3" fill="none"/><path d="M10.35 12.4v3.4M8.95 14.3l1.4 1.6 1.4-1.6" stroke="#df3f3f" stroke-width="1.3" fill="none"/></svg>
<div class="t" style="left:312.87px;top:333px;font-size:14px;color:#232629;transform:scaleX(1.0329);transform-origin:0 0;">README.md</div>
<div class="t" style="left:526.39px;top:333px;font-size:14px;color:#232629;transform:scaleX(1.1147);transform-origin:0 0;">Markdown document</div>
<div class="t" style="left:729.17px;top:333px;font-size:14px;color:#232629;transform:scaleX(1.0341);transform-origin:0 0;">1.9 KiB</div>
<div class="t" style="left:806.90px;top:333px;font-size:14px;color:#232629;transform:scaleX(1.0970);transform-origin:0 0;">3/30/20 3:14 PM</div>
<div class="t" style="left:939.77px;top:333px;font-size:14px;color:#232629;transform:scaleX(1.1278);transform-origin:0 0;">lynmp</div>
<div class="t" style="left:1012.67px;top:333px;font-size:14px;color:#232629;transform:scaleX(1.1278);transform-origin:0 0;">lynmp</div>
<svg class="a" style="left:287px;top:362px" width="16" height="21" viewBox="0 0 16 21"><path d="M1 0h9l6 6v14a1 1 0 0 1-1 1H1a1 1 0 0 1-1-1V1a1 1 0 0 1 1-1z" fill="#cf3b35"/><path d="M10 0l6 6h-6z" fill="#ef6a62"/><path d="M7.2 7.5V12.4L3.4 16.6M7.2 12.4L12.5 13.8" stroke="#f2d2d0" stroke-width="1" fill="none" stroke-linecap="round"/></svg>
<div class="t" style="left:312.80px;top:365px;font-size:14px;color:#232629;transform:scaleX(1.1019);transform-origin:0 0;">spec.pdf</div>
<div class="t" style="left:526.42px;top:365px;font-size:14px;color:#232629;transform:scaleX(1.0826);transform-origin:0 0;">PDF document</div>
<div class="t" style="left:729.15px;top:365px;font-size:14px;color:#232629;transform:scaleX(1.0529);transform-origin:0 0;">16.9 KiB</div>
<div class="t" style="left:806.89px;top:365px;font-size:14px;color:#232629;transform:scaleX(1.1121);transform-origin:0 0;">6/22/19 11:15 PM</div>
<div class="t" style="left:939.77px;top:365px;font-size:14px;color:#232629;transform:scaleX(1.1278);transform-origin:0 0;">lynmp</div>
<div class="t" style="left:1012.67px;top:365px;font-size:14px;color:#232629;transform:scaleX(1.1278);transform-origin:0 0;">lynmp</div>
<svg class="a" style="left:287px;top:394px" width="16" height="21" viewBox="0 0 16 21"><path d="M1 0h9l6 6v14a1 1 0 0 1-1 1H1a1 1 0 0 1-1-1V1a1 1 0 0 1 1-1z" fill="#e2e2e2"/><path d="M10 0l6 6h-6z" fill="#f7f7f7"/><rect x="10" y="6" width="6" height="0.8" fill="#d2d2d2"/><path d="M4 9.5h8M4 11.5h8M4 13.5h8M4 15.5h5" stroke="#646464" stroke-width="1"/></svg>
<div class="t" style="left:312.82px;top:397px;font-size:14px;color:#232629;transform:scaleX(1.0833);transform-origin:0 0;">spec.rst</div>
<div class="t" style="left:526.37px;top:397px;font-size:14px;color:#232629;transform:scaleX(1.1305);transform-origin:0 0;">reStructuredText document</div>
<div class="t" style="left:729.17px;top:397px;font-size:14px;color:#232629;transform:scaleX(1.0341);transform-origin:0 0;">2.9 KiB</div>
<div class="t" style="left:806.90px;top:397px;font-size:14px;color:#232629;transform:scaleX(1.0970);transform-origin:0 0;">3/30/20 3:14 PM</div>
<div class="t" style="left:939.77px;top:397px;font-size:14px;color:#232629;transform:scaleX(1.1278);transform-origin:0 0;">lynmp</div>
<div class="t" style="left:1012.67px;top:397px;font-size:14px;color:#232629;transform:scaleX(1.1278);transform-origin:0 0;">lynmp</div>
<svg class="a" style="left:287px;top:426px" width="16" height="21" viewBox="0 0 16 21"><path d="M1 0h9l6 6v14a1 1 0 0 1-1 1H1a1 1 0 0 1-1-1V1a1 1 0 0 1 1-1z" fill="#e2e2e2"/><path d="M10 0l6 6h-6z" fill="#f7f7f7"/><rect x="10" y="6" width="6" height="0.8" fill="#d2d2d2"/><path d="M4 9.5h8M4 11.5h8M4 13.5h8M4 15.5h5" stroke="#646464" stroke-width="1"/></svg>
<div class="t" style="left:312.81px;top:429px;font-size:14px;color:#232629;transform:scaleX(1.0885);transform-origin:0 0;">StyleGuide.rst</div>
<div class="t" style="left:526.37px;top:429px;font-size:14px;color:#232629;transform:scaleX(1.1305);transform-origin:0 0;">reStructuredText document</div>
<div class="t" style="left:729.11px;top:429px;font-size:14px;color:#232629;transform:scaleX(1.0915);transform-origin:0 0;">762 bytes</div>
<div class="t" style="left:806.90px;top:429px;font-size:14px;color:#232629;transform:scaleX(1.0970);transform-origin:0 0;">3/30/20 3:14 PM</div>
<div class="t" style="left:939.77px;top:429px;font-size:14px;color:#232629;transform:scaleX(1.1278);transform-origin:0 0;">lynmp</div>
<div class="t" style="left:1012.67px;top:429px;font-size:14px;color:#232629;transform:scaleX(1.1278);transform-origin:0 0;">lynmp</div>
<div class="a" style="left:310px;top:163px;width:214px;height:1px;background:#3daee9"></div>
<div class="t" style="left:8.62px;top:659px;font-size:14px;color:#232629;transform:scaleX(1.0835);transform-origin:0 0;">10 item(s) (3 hidden)</div>
<div class="t" style="left:834.75px;top:659px;font-size:14px;color:#232629;transform:scaleX(1.0500);transform-origin:0 0;">Free space: 1.6 TiB (Total: 1.8 TiB)</div>
</body></html>
